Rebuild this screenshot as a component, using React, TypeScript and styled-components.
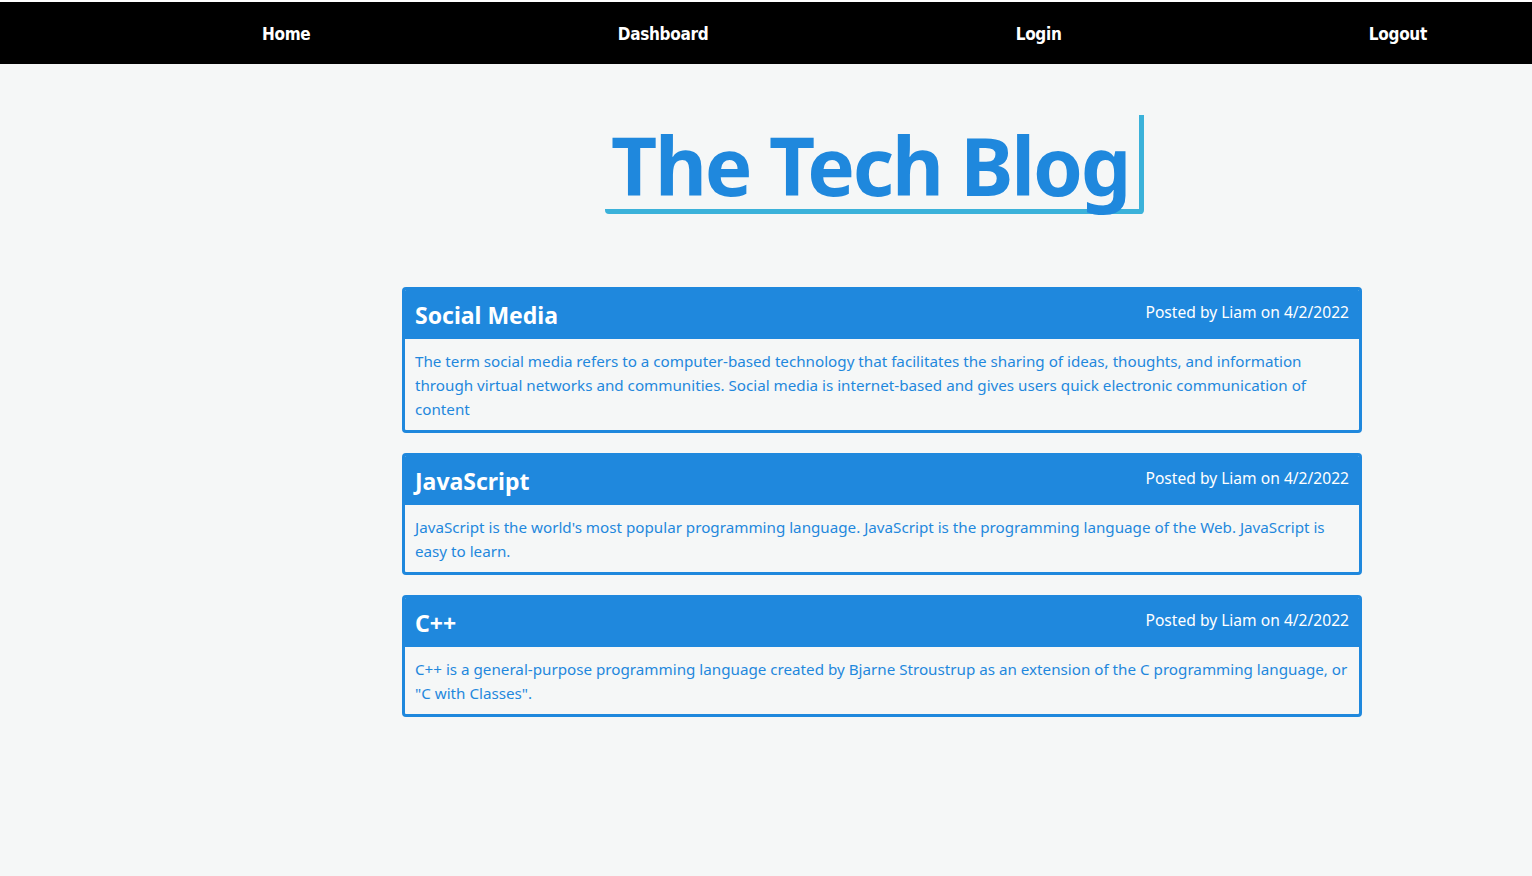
import React from "react";
import styled, { createGlobalStyle } from "styled-components";

const GlobalStyle = createGlobalStyle`
  html, body { margin: 0; padding: 0; }
  body {
    background: #f5f7f7;
    font-family: "Noto Sans", "Liberation Sans", sans-serif;
  }
`;

const TopLine = styled.div`
  height: 2px;
  background: #ffffff;
`;

const Nav = styled.nav`
  height: 62px;
  box-sizing: border-box;
  padding: 2px 105px 0 262px;
  background: #000000;
  display: flex;
  align-items: center;
  justify-content: space-between;
`;

const NavLink = styled.a`
  color: #ffffff;
  font-family: "DejaVu Sans Condensed", "DejaVu Sans", sans-serif;
  font-stretch: condensed;
  font-weight: 700;
  font-size: 17px;
  text-decoration: none;
  letter-spacing: -0.3px;
`;

const Main = styled.main`
  width: 960px;
  margin-left: 402px;
  display: flex;
  flex-direction: column;
`;

const TitleBox = styled.div`
  margin-top: 51px;
  margin-left: 203px;
  align-self: flex-start;
  border-right: 5px solid #3bb2da;
  border-bottom: 5px solid #3bb2da;
  border-radius: 0 0 4px 4px;
  padding: 0 10px 0 6px;
  height: 94px;
  display: flex;
  align-items: center;
`;

const Title = styled.h1`
  margin: 0;
  color: #1f88dd;
  font-family: "Noto Sans", sans-serif;
  font-weight: 700;
  font-size: 80px;
  line-height: 1;
  letter-spacing: -2.2px;
  padding-top: 6px;
`;

const PostList = styled.section`
  margin-top: 73px;
  display: flex;
  flex-direction: column;
  gap: 20px;
`;

const Card = styled.article`
  border: 3px solid #1f88dd;
  border-radius: 4px;
  overflow: hidden;
  background: #f5f7f7;
`;

const CardHeader = styled.header`
  height: 49px;
  background: #1f88dd;
  display: flex;
  justify-content: space-between;
  align-items: center;
  padding: 0 10px;
  color: #ffffff;
`;

const CardTitle = styled.h2`
  margin: 0;
  font-size: 23px;
  font-weight: 700;
  padding-top: 1px;
`;

const Meta = styled.span`
  font-size: 15.6px;
  align-self: flex-start;
  margin-top: 11px;
`;

const CardBody = styled.p`
  margin: 0;
  padding: 10px 10px 9px;
  color: #1f88dd;
  font-size: 15.2px;
  line-height: 24px;
`;

const posts = [
  {
    title: "Social Media",
    body: "The term social media refers to a computer-based technology that facilitates the sharing of ideas, thoughts, and information through virtual networks and communities. Social media is internet-based and gives users quick electronic communication of content",
  },
  {
    title: "JavaScript",
    body: "JavaScript is the world's most popular programming language. JavaScript is the programming language of the Web. JavaScript is easy to learn.",
  },
  {
    title: "C++",
    body: 'C++ is a general-purpose programming language created by Bjarne Stroustrup as an extension of the C programming language, or "C with Classes".',
  },
];

export default function App() {
  return (
    <>
      <GlobalStyle />
      <TopLine />
      <Nav>
        <NavLink href="#">Home</NavLink>
        <NavLink href="#">Dashboard</NavLink>
        <NavLink href="#">Login</NavLink>
        <NavLink href="#">Logout</NavLink>
      </Nav>
      <Main>
        <TitleBox>
          <Title>The Tech Blog</Title>
        </TitleBox>
        <PostList>
          {posts.map((p) => (
            <Card key={p.title}>
              <CardHeader>
                <CardTitle>{p.title}</CardTitle>
                <Meta>Posted by Liam on 4/2/2022</Meta>
              </CardHeader>
              <CardBody>{p.body}</CardBody>
            </Card>
          ))}
        </PostList>
      </Main>
    </>
  );
}
